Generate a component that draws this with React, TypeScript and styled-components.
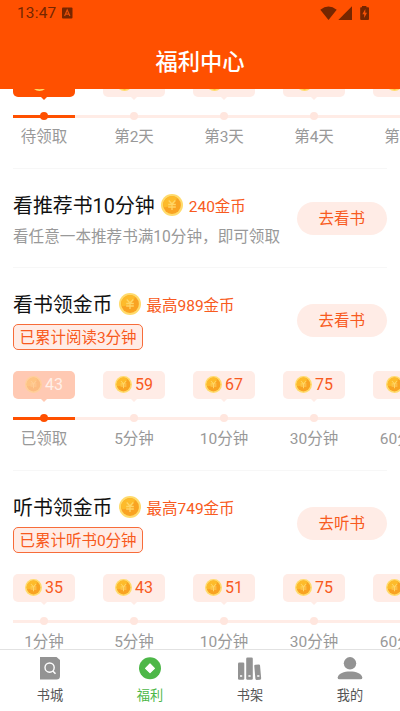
import React from "react";
import styled, { createGlobalStyle, css } from "styled-components";

const GlobalStyle = createGlobalStyle`
  * { box-sizing: border-box; }
  body {
    margin: 0;
    background: #fff;
    font-family: Roboto, "Noto Sans CJK SC", sans-serif;
  }
`;

const ORANGE = "#ff5000";
const TEXT_ORANGE = "#f85a20";
const PALE = "#ffece6";

const Screen = styled.div`
  width: 400px;
  height: 711px;
  display: flex;
  flex-direction: column;
  overflow: hidden;
  background: #fff;
`;

const Header = styled.header`
  flex: none;
  height: 89px;
  background: ${ORANGE};
`;

const StatusBar = styled.div`
  height: 26px;
  padding: 0 31px 0 17px;
  display: flex;
  align-items: center;
  color: #752600;
  svg { display: block; }
`;

const Clock = styled.span`
  font-size: 15.4px;
  line-height: 26px;
  letter-spacing: 0.2px;
  margin-right: 6px;
`;

const StatusIcons = styled.div`
  margin-left: auto;
`;

const PageTitle = styled.h1`
  margin: 19px 0 0;
  text-align: center;
  color: #fff;
  font-size: 22.3px;
  line-height: 34px;
  font-weight: 500;
`;

const Main = styled.main`
  flex: 1;
  min-height: 0;
  overflow: hidden;
`;

const Scrolled = styled.div`
  margin-top: -20px;
  padding-left: 13px;
`;

const Section = styled.section<{ $height: number; $top?: number }>`
  height: ${(p) => p.$height}px;
  padding-top: ${(p) => p.$top ?? 0}px;
  display: flex;
  flex-direction: column;
`;

const Divider = styled.div`
  margin: auto 13px 0 0;
  height: 1px;
  flex: none;
  background: #f7f7f7;
`;

const TaskRow = styled.div`
  display: flex;
  align-items: center;
  justify-content: space-between;
  padding-right: 13.5px;
`;

const TitleLine = styled.div`
  display: flex;
  align-items: center;
  height: 30px;
`;

const TaskTitle = styled.h2`
  margin: 0;
  padding-top: 2px;
  font-size: 19.9px;
  line-height: 30px;
  font-weight: 400;
  color: #111;
  white-space: nowrap;
`;

const CoinSlot = styled.span`
  width: 22px;
  height: 22px;
  margin: 0 5.5px 2px 6.5px;
  svg { display: block; }
`;

const Reward = styled.span`
  padding-top: 1px;
  font-size: 15.5px;
  line-height: 24px;
  color: ${TEXT_ORANGE};
`;

const Description = styled.p`
  margin: 4px 0 -3px;
  font-size: 15.6px;
  line-height: 24px;
  color: #999;
  white-space: nowrap;
`;

const Tag = styled.div`
  width: 130px;
  height: 26px;
  margin-top: 4px;
  border: 1.4px solid #f76c3a;
  border-radius: 5px;
  background: ${PALE};
  color: ${TEXT_ORANGE};
  font-size: 15.5px;
  line-height: 26px;
  text-align: center;
  white-space: nowrap;
`;

const ActionButton = styled.button`
  width: 89.5px;
  height: 33px;
  padding: 2px 0 0;
  border: 0;
  border-radius: 17px;
  background: ${PALE};
  color: ${TEXT_ORANGE};
  font: inherit;
  font-size: 15.5px;
  line-height: 31px;
`;

const TimelineGap = styled.div`
  flex: none;
  height: 21px;
`;

const Timeline = styled.div`
  display: flex;
  flex: none;
  width: 450px;
`;

type StepState = "idle" | "ready" | "done";

const Step = styled.div`
  width: 90px;
  flex: none;
`;

const bubbleColor = { idle: PALE, ready: ORANGE, done: "#ffc9b3" };

const Bubble = styled.div<{ $state: StepState }>`
  position: relative;
  width: 62px;
  height: 27.5px;
  border-radius: 5px;
  display: flex;
  align-items: center;
  justify-content: center;
  gap: 3px;
  background: ${(p) => bubbleColor[p.$state]};
  color: ${(p) => (p.$state === "idle" ? TEXT_ORANGE : "#fff")};
  font-size: 16px;
  line-height: 28px;
  ${(p) => p.$state === "done" && css`
    color: #fff0e9;
    svg { opacity: 0.35; }
  `}
  &::after {
    content: "";
    position: absolute;
    top: 27px;
    left: 27px;
    border: 4px solid transparent;
    border-bottom: 0;
    border-top-color: ${(p) => bubbleColor[p.$state]};
  }
`;

const Amount = styled.span<{ $width: number }>`
  width: ${(p) => p.$width}px;
`;

const Track = styled.div<{ $active: boolean }>`
  height: 8px;
  margin-top: 15.5px;
  display: flex;
  align-items: center;
  background: linear-gradient(${PALE}, ${PALE}) center / 100% 3px no-repeat;
  ${(p) => p.$active && css`
    background:
      linear-gradient(${ORANGE}, ${ORANGE}) left center / 62px 3px no-repeat,
      linear-gradient(${PALE}, ${PALE}) center / 100% 3px no-repeat;
  `}
`;

const Dot = styled.span<{ $active: boolean }>`
  width: 8px;
  height: 8px;
  margin-left: 27px;
  border-radius: 50%;
  background: ${(p) => (p.$active ? ORANGE : "#ffe6de")};
`;

const StepLabel = styled.div`
  width: 62px;
  margin-top: 5px;
  text-align: center;
  font-size: 15.5px;
  line-height: 24px;
  color: #999;
  white-space: nowrap;
`;

const TabBar = styled.nav`
  flex: none;
  height: 62px;
  border-top: 1px solid #e2e2e2;
  background: #fff;
  display: grid;
  grid-template-columns: repeat(4, 1fr);
`;

const Tab = styled.a<{ $active?: boolean }>`
  display: flex;
  flex-direction: column;
  align-items: center;
  padding-top: 5px;
  color: ${(p) => (p.$active ? "#4db748" : "#555")};
  font-size: 13.2px;
  line-height: 20px;
  svg { display: block; margin-bottom: 4px; }
`;

function Coin({ size }: { size: number }) {
  return (
    <svg width={size} height={size} viewBox="0 0 22 22">
      <circle cx="11" cy="11" r="11" fill="#ffdb6c" />
      <circle cx="11" cy="11" r="8.9" fill="#f9a322" />
      <path d="M2.6 13A8.6 8.6 0 0 1 16 3.8A12 12 0 0 1 2.6 13Z" fill="#fdbb2b" />
      <path
        d="M7.7 6.5L11 10L14.3 6.5M7.2 10.5H14.8M7.2 13H14.8M11 10V16"
        fill="none"
        stroke="#ffd566"
        strokeWidth="1.3"
      />
    </svg>
  );
}

type StepData = { amount?: string; label: string; state?: StepState };

function Steps({ items }: { items: StepData[] }) {
  return (
    <Timeline>
      {items.map(({ amount, label, state = "idle" }) => (
        <Step key={label}>
          <Bubble $state={state}>
            <Coin size={17} />
            <Amount $width={amount ? 18 : state === "ready" ? 7 : 17}>{amount}</Amount>
          </Bubble>
          <Track $active={state !== "idle"}>
            <Dot $active={state !== "idle"} />
          </Track>
          <StepLabel>{label}</StepLabel>
        </Step>
      ))}
    </Timeline>
  );
}

type TaskProps = {
  title: string;
  reward: string;
  action: string;
  children: React.ReactNode;
};

function Task({ title, reward, action, children }: TaskProps) {
  return (
    <TaskRow>
      <div>
        <TitleLine>
          <TaskTitle>{title}</TaskTitle>
          <CoinSlot><Coin size={22} /></CoinSlot>
          <Reward>{reward}</Reward>
        </TitleLine>
        {children}
      </div>
      <ActionButton>{action}</ActionButton>
    </TaskRow>
  );
}

const days: StepData[] = [
  { label: "待领取", state: "ready" },
  { label: "第2天" },
  { label: "第3天" },
  { label: "第4天" },
  { label: "第5天" },
];

const reading: StepData[] = [
  { amount: "43", label: "已领取", state: "done" },
  { amount: "59", label: "5分钟" },
  { amount: "67", label: "10分钟" },
  { amount: "75", label: "30分钟" },
  { label: "60分钟" },
];

const listening: StepData[] = [
  { amount: "35", label: "1分钟" },
  { amount: "43", label: "5分钟" },
  { amount: "51", label: "10分钟" },
  { amount: "75", label: "30分钟" },
  { label: "60分钟" },
];

export default function App() {
  return (
    <Screen>
      <GlobalStyle />
      <Header>
        <StatusBar>
          <Clock>13:47</Clock>
          <svg width="11" height="12" viewBox="0 0 11 12">
            <rect y="0.5" width="10.5" height="11" rx="1" fill="currentColor" />
            <path d="M2.6 9L5.2 3L7.9 9M3.6 7.2H6.9" fill="none" stroke="#e85009" strokeWidth="1.2" />
          </svg>
          <StatusIcons>
            <svg width="49" height="16" viewBox="0 0 49 16">
              <path d="M0.3 4.7Q8.5 -1.5 16.7 4.7L8.5 15Z" fill="currentColor" />
              <path d="M18.3 15L32 1.2V15Z" fill="currentColor" />
              <path d="M42 1H46.4V2.3H48.2Q49 2.3 49 3.2V14Q49 15 48 15H41.2Q40.2 15 40.2 14V3.2Q40.2 2.3 41 2.3H42Z" fill="currentColor" />
              <path d="M45.3 4L42.3 9.2H44.2V13L47 7.8H45.3Z" fill="#f65208" />
            </svg>
          </StatusIcons>
        </StatusBar>
        <PageTitle>福利中心</PageTitle>
      </Header>
      <Main>
        <Scrolled>
          <Section $height={100}>
            <Steps items={days} />
            <Divider />
          </Section>
          <Section $height={99} $top={22}>
            <Task title="看推荐书10分钟" reward="240金币" action="去看书">
              <Description>看任意一本推荐书满10分钟，即可领取</Description>
            </Task>
            <Divider />
          </Section>
          <Section $height={203} $top={22}>
            <Task title="看书领金币" reward="最高989金币" action="去看书">
              <Tag>已累计阅读3分钟</Tag>
            </Task>
            <TimelineGap />
            <Steps items={reading} />
            <Divider />
          </Section>
          <Section $height={203} $top={22}>
            <Task title="听书领金币" reward="最高749金币" action="去听书">
              <Tag>已累计听书0分钟</Tag>
            </Task>
            <TimelineGap />
            <Steps items={listening} />
          </Section>
        </Scrolled>
      </Main>
      <TabBar>
        <Tab>
          <svg width="26" height="27" viewBox="0 0 26 27">
            <path d="M3 2H19.5L23 5V21Q23 24.5 19.5 24.5H3Z" fill="#939393" />
            <circle cx="12.6" cy="12.6" r="4.6" fill="none" stroke="#fff" strokeWidth="1.4" />
            <path d="M15.8 16L18.5 18.8" stroke="#fff" strokeWidth="1.5" />
          </svg>
          书城
        </Tab>
        <Tab $active>
          <svg width="26" height="27" viewBox="0 0 26 27">
            <circle cx="13" cy="13.3" r="11" fill="currentColor" />
            <path d="M13 8.9L17.4 13.3L13 17.7L8.6 13.3Z" fill="#fff" stroke="#fff" strokeWidth="1.2" strokeLinejoin="round" />
          </svg>
          福利
        </Tab>
        <Tab>
          <svg width="26" height="27" viewBox="0 0 26 27">
            <g fill="#939393">
              <rect x="1" y="7.5" width="6.3" height="17.3" rx="1.3" />
              <rect x="9.2" y="2.5" width="6.6" height="22.3" rx="1.3" />
              <rect x="17.8" y="9.5" width="5.8" height="15.3" rx="1.2" transform="rotate(-5 21 17)" />
            </g>
            <path d="M3 21H5.2M11.4 21H13.6M20.2 21H22.4" stroke="#fff" strokeWidth="1.5" />
          </svg>
          书架
        </Tab>
        <Tab>
          <svg width="26" height="27" viewBox="0 0 26 27">
            <circle cx="13" cy="8.3" r="6.2" fill="#939393" />
            <path d="M0.7 22.4C1.5 18.2 7 16.4 13 16.4S24.5 18.2 25.3 22.4Q25.5 24.3 23.5 24.3H2.5Q0.5 24.3 0.7 22.4Z" fill="#939393" />
          </svg>
          我的
        </Tab>
      </TabBar>
    </Screen>
  );
}
